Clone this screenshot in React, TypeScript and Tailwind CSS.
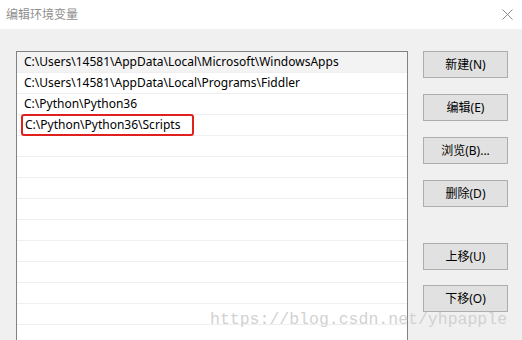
import React from 'react';

const paths = [
  'C:\\Users\\14581\\AppData\\Local\\Microsoft\\WindowsApps',
  'C:\\Users\\14581\\AppData\\Local\\Programs\\Fiddler',
  'C:\\Python\\Python36',
  'C:\\Python\\Python36\\Scripts',
];

const Btn: React.FC<{ label: string; className?: string }> = ({ label, className = '' }) => (
  <button
    className={`w-[85px] h-[27px] bg-[#e1e1e1] border border-[#adadad] text-[12px] text-black flex items-center justify-center ${className}`}
  >
    {label}
  </button>
);

export default function App() {
  const rows = Array.from({ length: 14 }, (_, i) => paths[i] ?? '');
  return (
    <div className="relative w-[522px] h-[340px] overflow-hidden flex flex-col bg-[#f0f0f0] font-['Noto_Sans','Noto_Sans_CJK_SC',sans-serif]">
      {/* title bar */}
      <div className="h-[29px] bg-white flex items-center justify-between pl-[6px] pr-[9px] shrink-0">
        <span className="text-[12px] text-[#8f8f8f]">编辑环境变量</span>
        <svg width="11" height="11" viewBox="0 0 11 11">
          <path d="M0.5 0.5L10.5 10.5M10.5 0.5L0.5 10.5" stroke="#8a8a8a" strokeWidth="1" />
        </svg>
      </div>

      {/* body */}
      <div className="flex flex-1 pl-[16px] pt-[22px] gap-[15px]">
        <div className="w-[392px] bg-white border border-[#828282] border-b-0 flex flex-col">
          {rows.map((p, i) => (
            <div
              key={i}
              className={`h-[21px] shrink-0 flex items-center pl-[7px] text-[12px] text-black border-b border-[#efefef] ${
                i === 0 ? 'bg-[#f3f3f3]' : ''
              }`}
            >
              {i === 3 ? (
                <span className="-ml-[3px] pl-[2px] pr-[12px] h-[22px] flex items-center border-2 border-[#e0201e] rounded-[3px]">
                  {p}
                </span>
              ) : (
                <span>{p}</span>
              )}
            </div>
          ))}
        </div>

        <div className="flex flex-col">
          <Btn label="新建(N)" />
          <Btn label="编辑(E)" className="mt-[16px]" />
          <Btn label="浏览(B)..." className="mt-[16px]" />
          <Btn label="删除(D)" className="mt-[16px]" />
          <Btn label="上移(U)" className="mt-[36px]" />
          <Btn label="下移(O)" className="mt-[15px]" />
        </div>
      </div>

      {/* watermark */}
      <div className="absolute left-[210px] top-[312px] text-[16.5px] leading-none text-[#d2d2d2] font-['Liberation_Mono',monospace] pointer-events-none">
        https://blog.csdn.net/yhpapple
      </div>
    </div>
  );
}
